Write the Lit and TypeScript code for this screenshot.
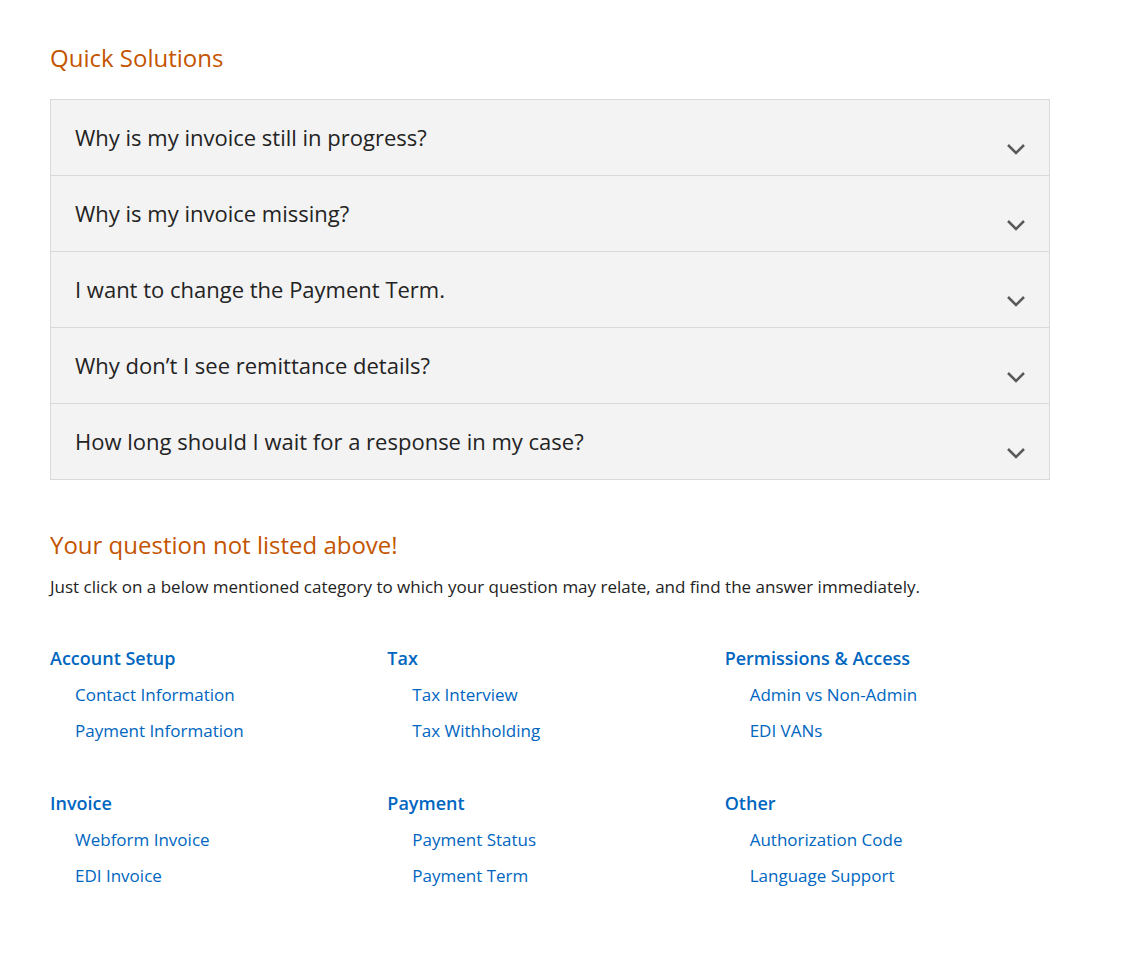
import { LitElement, html, css } from "lit";
import { customElement } from "lit/decorators.js";

const QUESTIONS = [
  "Why is my invoice still in progress?",
  "Why is my invoice missing?",
  "I want to change the Payment Term.",
  "Why don’t I see remittance details?",
  "How long should I wait for a response in my case?",
];

const CATEGORIES = [
  { title: "Account Setup", links: ["Contact Information", "Payment Information"] },
  { title: "Tax", links: ["Tax Interview", "Tax Withholding"] },
  { title: "Permissions & Access", links: ["Admin vs Non-Admin", "EDI VANs"] },
  { title: "Invoice", links: ["Webform Invoice", "EDI Invoice"] },
  { title: "Payment", links: ["Payment Status", "Payment Term"] },
  { title: "Other", links: ["Authorization Code", "Language Support"] },
];

@customElement("app-root")
export class AppRoot extends LitElement {
  static styles = css`
    :host {
      display: block;
      box-sizing: border-box;
      max-width: 1100px;
      padding: 39px 50px;
      font-family: "Open Sans", "Noto Sans", sans-serif;
      color: #232323;
      background: #fff;
    }
    h2, h3, p, ul { margin: 0; padding: 0; font-weight: 400; }
    ul { list-style: none; }
    .heading {
      font-size: 24px;
      line-height: 38px;
      color: #c45500;
    }
    .accordion {
      margin: 22px 0 46px;
      border: 1px solid #d9d9d9;
      background: #f3f3f3;
    }
    .item + .item { border-top: 1px solid #d9d9d9; }
    .question {
      display: flex;
      align-items: flex-start;
      justify-content: space-between;
      width: 100%;
      padding: 20px 24px;
      border: 0;
      background: none;
      font: inherit;
      font-size: 22px;
      line-height: 35px;
      color: inherit;
      text-align: left;
      cursor: pointer;
    }
    .chevron {
      flex: none;
      align-self: flex-end;
      width: 18px;
      height: 18px;
    }
    .intro {
      margin-top: 9px;
      font-size: 17px;
      line-height: 28px;
    }
    .categories {
      display: grid;
      grid-template-columns: repeat(3, 1fr);
      gap: 36px 12px;
      margin-top: 39px;
      font-size: 17px;
      line-height: 36px;
    }
    .title { margin-bottom: 1px; font-size: 18px; font-weight: 600; }
    .links { padding-left: 25px; }
    a { color: #0066c0; text-decoration: none; }
    a:hover { text-decoration: underline; }
  `;

  render() {
    return html`
      <h2 class="heading">Quick Solutions</h2>
      <div class="accordion">
        ${QUESTIONS.map((q) => html`
          <div class="item">
            <button class="question" type="button" aria-expanded="false">
              <span>${q}</span>
              <svg class="chevron" viewBox="0 0 18 18" fill="none" stroke="#5a5a5a" stroke-width="2.5" aria-hidden="true">
                <path d="M1 8l8 8 8-8" />
              </svg>
            </button>
          </div>`)}
      </div>
      <h2 class="heading">Your question not listed above!</h2>
      <p class="intro">Just click on a below mentioned category to which your question may relate, and find the answer immediately.</p>
      <div class="categories">
        ${CATEGORIES.map((c) => html`
          <section>
            <h3 class="title"><a href="#">${c.title}</a></h3>
            <ul class="links">
              ${c.links.map((l) => html`<li><a href="#">${l}</a></li>`)}
            </ul>
          </section>`)}
      </div>
    `;
  }
}
